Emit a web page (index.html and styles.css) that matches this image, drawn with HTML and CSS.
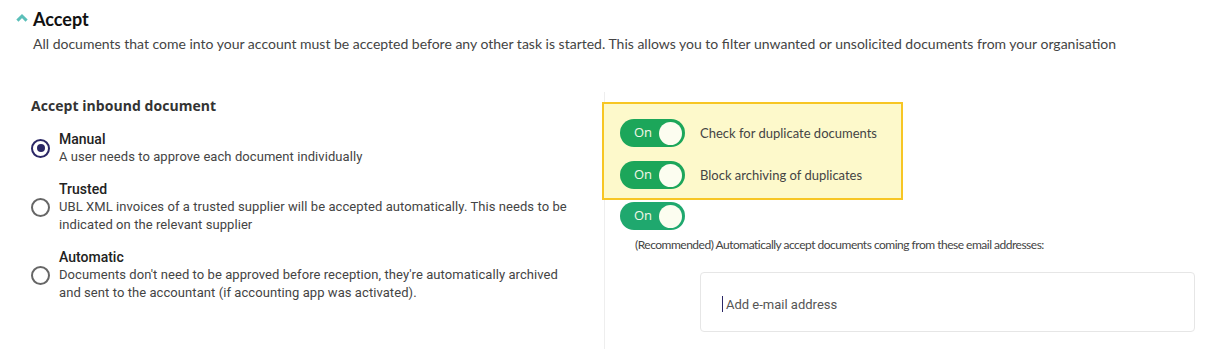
FILE: index.html
```html
<!DOCTYPE html>
<html>
<head>
<meta charset="utf-8">
<link rel="stylesheet" href="styles.css">
</head>
<body>
<div class="page">
  <div class="section-head">
    <svg class="chev" width="12" height="9" viewBox="0 0 12 9"><path d="M1.4 7.6 L6 3 L10.6 7.6" fill="none" stroke="#5bbfb9" stroke-width="3"/></svg>
    <h2 class="title">Accept</h2>
  </div>
  <p class="intro">All documents that come into your account must be accepted before any other task is started. This allows you to filter unwanted or unsolicited documents from your organisation</p>

  <div class="columns">
    <div class="left">
      <h3 class="group-title">Accept inbound document</h3>
      <div class="option">
        <span class="radio checked"></span>
        <div class="opt-text">
          <div class="opt-title">Manual</div>
          <div class="opt-desc">A user needs to approve each document individually</div>
        </div>
      </div>
      <div class="option">
        <span class="radio"></span>
        <div class="opt-text">
          <div class="opt-title">Trusted</div>
          <div class="opt-desc">UBL XML invoices of a trusted supplier will be accepted automatically. This needs to be indicated on the relevant supplier</div>
        </div>
      </div>
      <div class="option">
        <span class="radio"></span>
        <div class="opt-text">
          <div class="opt-title">Automatic</div>
          <div class="opt-desc">Documents don't need to be approved before reception, they're automatically archived and sent to the accountant (if accounting app was activated).</div>
        </div>
      </div>
    </div>

    <div class="right">
      <div class="highlight">
        <div class="toggle-row">
          <span class="toggle"><span class="t-label">On</span><span class="knob"></span></span>
          <span class="toggle-text">Check for duplicate documents</span>
        </div>
        <div class="toggle-row">
          <span class="toggle"><span class="t-label">On</span><span class="knob"></span></span>
          <span class="toggle-text">Block archiving of duplicates</span>
        </div>
      </div>
      <div class="solo">
        <span class="toggle alt"><span class="t-label">On</span><span class="knob"></span></span>
      </div>
      <p class="recommend">(Recommended) Automatically accept documents coming from these email addresses:</p>
      <div class="email-box">
        <span class="caret"></span><span class="placeholder">Add e-mail address</span>
      </div>
    </div>
  </div>
</div>
</body>
</html>
```

FILE: styles.css
```css
* { box-sizing: border-box; }
html, body { margin: 0; padding: 0; background: #fff; }
body { font-family: Lato, "Liberation Sans", sans-serif; color: #333; width: 1212px; height: 349px; overflow: hidden; }

.page { padding-top: 7px; }

.section-head { display: flex; align-items: center; padding-left: 16px; height: 24px; }
.chev { margin-right: 5px; margin-top: -3px; }
.title { margin: 0; font-family: Lato, sans-serif; font-weight: 700; font-size: 18px; color: #111; line-height: 24px; }

.intro { margin: 3px 0 0 33px; font-size: 14px; line-height: 20px; color: #444; }

.columns { display: flex; margin-top: 38px; }

.left { width: 604px; padding-left: 31px; padding-top: 4px; }
.group-title { margin: 0 0 14px; font-family: "Open Sans", sans-serif; font-weight: 700; font-size: 14px; line-height: 20px; color: #333; letter-spacing: 0.05px; }

.option { display: flex; align-items: center; margin-bottom: 14px; }
.radio { width: 19px; height: 19px; border-radius: 50%; border: 2px solid #666; flex: none; margin-right: 9px; position: relative; }
.radio.checked { border-color: #2b2766; }
.radio.checked::after { content: ""; position: absolute; left: 3.5px; top: 3.5px; width: 8px; height: 8px; border-radius: 50%; background: #2b2766; }
.opt-text { font-family: Roboto, sans-serif; }
.opt-title { font-size: 14px; font-weight: 500; line-height: 18px; color: #222; }
.opt-desc { font-size: 13px; line-height: 18px; color: #444; width: 512px; letter-spacing: 0.07px; }

.right { flex: 1; border-left: 1px solid #eee; padding-top: 10px; min-height: 270px; }

.highlight { margin-left: -3px; width: 301px; height: 98px; background: #fdf9cb; border: 2px solid #f7c624; padding: 15px 0 0 16px; }
.toggle-row { display: flex; align-items: center; margin-bottom: 14px; }
.toggle-text { font-size: 13px; color: #444; margin-left: 15px; }

.toggle { display: inline-flex; align-items: center; justify-content: space-between; width: 65px; height: 28px; border-radius: 14px; background: #1ca65a; padding: 0 3px 0 14px; flex: none; }
.toggle.alt { background: #1fa86e; }
.t-label { font-family: "Open Sans", sans-serif; font-size: 13px; color: #f4f7e8; margin-top: -3px; }
.knob { width: 23px; height: 23px; border-radius: 50%; background: #fcfdf0; }

.solo { padding-left: 15px; margin-top: 2px; }

.recommend { margin: 7px 0 0 30px; font-size: 12px; line-height: 16px; color: #444; letter-spacing: -0.5px; }

.email-box { margin: 19px 0 0 95px; width: 495px; height: 60px; border: 1px solid #e6e6e6; border-radius: 4px; display: flex; align-items: center; padding-left: 21px; padding-top: 4px; }
.caret { width: 1px; height: 16px; background: #2b2766; margin-right: 3px; }
.placeholder { font-family: Roboto, sans-serif; font-size: 13px; color: #555; }
```
